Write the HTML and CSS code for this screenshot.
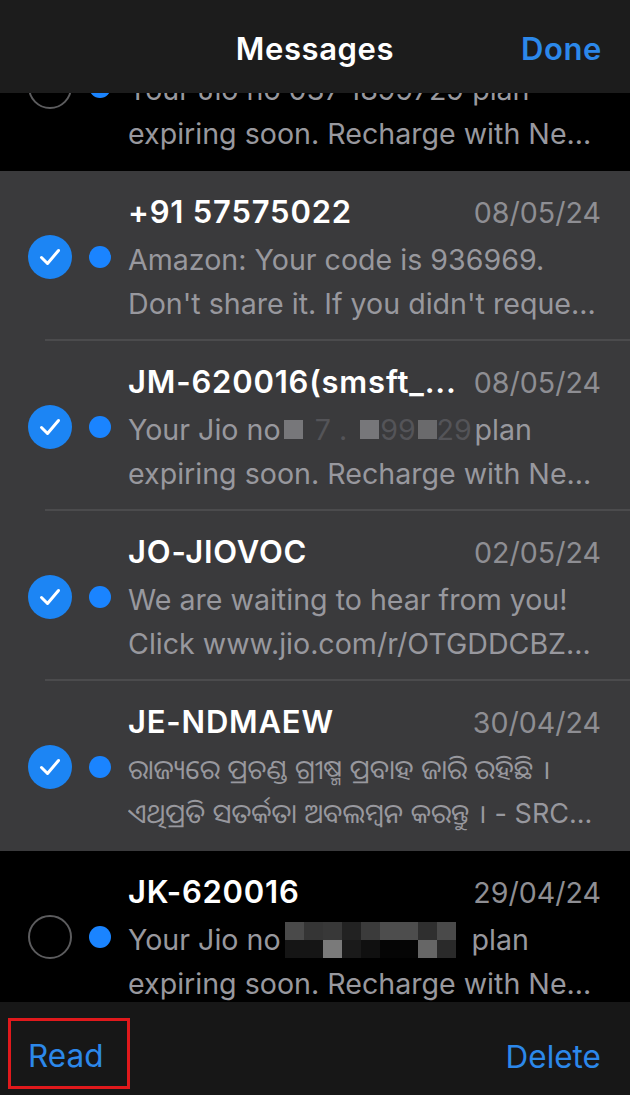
FILE: index.html
```html
<!DOCTYPE html>
<html>
<head>
<meta charset="utf-8">
<link rel="stylesheet" href="styles.css">
</head>
<body>
<div class="screen">
  <header class="header">
    <div class="title">Messages</div>
    <div class="done">Done</div>
  </header>

  <div class="list">
    <div class="row">
      <div class="check"></div>
      <div class="dot"></div>
      <div class="content">
        <div class="top"><span class="name">JM-620016</span><span class="date">08/05/24</span></div>
        <div class="msg">Your Jio no 037 1899729 plan</div>
        <div class="msg">expiring soon. Recharge with Ne...</div>
      </div>
    </div>

    <div class="row selected sep">
      <div class="check on"><svg viewBox="0 0 44 44"><path d="M13.5 22.5 L19.5 28.5 L30.5 15.5" /></svg></div>
      <div class="dot"></div>
      <div class="content">
        <div class="top"><span class="name">+91 57575022</span><span class="date">08/05/24</span></div>
        <div class="msg">Amazon: Your code is 936969.</div>
        <div class="msg">Don't share it. If you didn't reque...</div>
      </div>
    </div>

    <div class="row selected sep">
      <div class="check on"><svg viewBox="0 0 44 44"><path d="M13.5 22.5 L19.5 28.5 L30.5 15.5" /></svg></div>
      <div class="dot"></div>
      <div class="content">
        <div class="top"><span class="name">JM-620016(smsft_...</span><span class="date">08/05/24</span></div>
        <div class="msg">Your Jio no<span class="redact light"><i class="px g1"></i><b class="w57">7 .</b><i class="px g1"></i><b class="w39">99</b><i class="px g2"></i><b class="w31">29</b></span>plan</div>
        <div class="msg">expiring soon. Recharge with Ne...</div>
      </div>
    </div>

    <div class="row selected sep">
      <div class="check on"><svg viewBox="0 0 44 44"><path d="M13.5 22.5 L19.5 28.5 L30.5 15.5" /></svg></div>
      <div class="dot"></div>
      <div class="content">
        <div class="top"><span class="name">JO-JIOVOC</span><span class="date">02/05/24</span></div>
        <div class="msg">We are waiting to hear from you!</div>
        <div class="msg">Click www.jio.com/r/OTGDDCBZ...</div>
      </div>
    </div>

    <div class="row selected">
      <div class="check on"><svg viewBox="0 0 44 44"><path d="M13.5 22.5 L19.5 28.5 L30.5 15.5" /></svg></div>
      <div class="dot"></div>
      <div class="content">
        <div class="top"><span class="name">JE-NDMAEW</span><span class="date">30/04/24</span></div>
        <div class="msg odia">ରାଜ୍ୟରେ ପ୍ରଚଣ୍ଡ ଗ୍ରୀଷ୍ମ ପ୍ରବାହ ଜାରି ରହିଛି ।</div>
        <div class="msg odia">ଏଥିପ୍ରତି ସତର୍କତା ଅବଲମ୍ବନ କରନ୍ତୁ । - SRC...</div>
      </div>
    </div>

    <div class="row">
      <div class="check"></div>
      <div class="dot"></div>
      <div class="content">
        <div class="top"><span class="name">JK-620016</span><span class="date">29/04/24</span></div>
        <div class="msg">Your Jio no<span class="redact dark"><span class="pxrow"><i class="px" style="background:#4a4a4a"></i><i class="px" style="background:#353535"></i><i class="px" style="background:#383838"></i><i class="px" style="background:#222222"></i><i class="px" style="background:#3b3b3b"></i><i class="px" style="background:#4d4d4d"></i><i class="px" style="background:#4d4d4d"></i><i class="px" style="background:#2f2f2f"></i><i class="px" style="background:#4a4a4a"></i></span><span class="pxrow"><i class="px" style="background:#151515"></i><i class="px" style="background:#151515"></i><i class="px" style="background:#7a7a7a"></i><i class="px" style="background:#1a1a1a"></i><i class="px" style="background:#101010"></i><i class="px" style="background:#050505"></i><i class="px" style="background:#050505"></i><i class="px" style="background:#666666"></i><i class="px" style="background:#2a2a2a"></i></span></span>plan</div>
        <div class="msg">expiring soon. Recharge with Ne...</div>
      </div>
    </div>
  </div>

  <footer class="toolbar">
    <div class="read-box"><span class="action">Read</span></div>
    <span class="action delete">Delete</span>
  </footer>
</div>
</body>
</html>
```

FILE: styles.css
```css
* { box-sizing: border-box; margin: 0; padding: 0; }

html, body {
  background: #000;
}

body {
  font-family: Inter, "Noto Sans", "Noto Sans Oriya", "DejaVu Sans", sans-serif;
  -webkit-font-smoothing: antialiased;
}

.screen {
  position: relative;
  width: 630px;
  height: 1095px;
  overflow: hidden;
  background: #000;
  display: flex;
  flex-direction: column;
}

.header {
  position: absolute;
  top: 0;
  left: 0;
  right: 0;
  height: 93px;
  background: #1c1c1c;
  display: flex;
  align-items: center;
  justify-content: center;
  z-index: 2;
}

.title {
  color: #fff;
  font-size: 31px;
  line-height: 40px;
  font-weight: 600;
  letter-spacing: 0.6px;
  margin-top: 5px;
}

.done {
  position: absolute;
  right: 28px;
  top: 29px;
  color: #2c88ea;
  font-size: 31px;
  line-height: 40px;
  font-weight: 600;
  letter-spacing: 0.6px;
}

.list {
  flex: 1;
  overflow: hidden;
  padding-top: 1px;
  display: flex;
  flex-direction: column;
}

.row {
  flex: none;
  height: 170px;
  display: flex;
  align-items: center;
  padding-left: 28px;
  padding-right: 29px;
  background: #000;
}

.row.selected {
  background-color: #3a3a3c;
}

.row.sep {
  background-image: linear-gradient(#4b4b4d, #4b4b4d);
  background-repeat: no-repeat;
  background-position: 45px 100%;
  background-size: calc(100% - 45px) 2px;
}

.check {
  flex: none;
  width: 44px;
  height: 44px;
  border-radius: 50%;
  border: 2px solid #5c5c5e;
  margin-top: 2px;
}

.check.on {
  border: none;
  background: #1c85f4;
}

.check svg {
  width: 44px;
  height: 44px;
  display: block;
}

.check svg path {
  fill: none;
  stroke: #fff;
  stroke-width: 3;
  stroke-linecap: round;
  stroke-linejoin: round;
}

.dot {
  flex: none;
  width: 22px;
  height: 22px;
  border-radius: 50%;
  background: #1a84ff;
  margin-left: 17px;
  margin-top: 2px;
}

.content {
  flex: 1;
  min-width: 0;
  margin-left: 17px;
  align-self: stretch;
  padding-top: 19px;
}

.top {
  display: flex;
  justify-content: space-between;
  align-items: baseline;
  height: 44px;
  line-height: 44px;
  margin-bottom: 4px;
}

.name {
  color: #fff;
  font-size: 31px;
  font-weight: 600;
  letter-spacing: 0.8px;
  white-space: nowrap;
}

.date {
  color: #8e8e93;
  font-size: 28.6px;
  white-space: nowrap;
}

.msg {
  color: #98989e;
  font-size: 28.6px;
  line-height: 44px;
  height: 44px;
  white-space: nowrap;
  overflow: hidden;
}

.msg.odia {
  font-size: 27px;
}

.redact {
  display: inline-flex;
  vertical-align: middle;
}

.redact.light {
  align-items: center;
  height: 19px;
  margin: -6px 7px 0 3px;
}

.redact.light b {
  flex: none;
  font-weight: 400;
  color: #545458;
  font-size: 28.6px;
  line-height: 19px;
  text-align: center;
}

.w57 { width: 57px; }
.w39 { width: 39px; }
.w31 { width: 31px; }

.redact.light .px {
  width: 19px;
  height: 19px;
}

.g1 { background: #77777a; }
.g2 { background: #6a6a6c; }

.redact.dark {
  flex-direction: column;
  margin: -4px 16px 0 4px;
}

.pxrow {
  display: flex;
}

.redact.dark .px {
  width: 19px;
  height: 18px;
}

.px {
  display: block;
  flex: none;
}

.toolbar {
  flex: none;
  height: 93px;
  background: #171717;
  display: flex;
  justify-content: space-between;
  align-items: flex-start;
  padding: 16px 29px 0 8px;
}

.read-box {
  width: 122px;
  height: 71px;
  border: 3px solid #e0191c;
  padding-left: 17px;
  display: flex;
  align-items: center;
  padding-top: 5px;
}

.action {
  color: #2c88ea;
  font-size: 31.5px;
  line-height: 40px;
  font-weight: 400;
}

.delete {
  margin-top: 19px;
}
```
